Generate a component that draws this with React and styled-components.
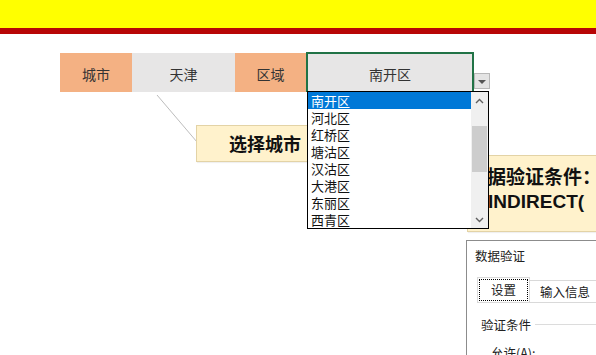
import React from "react";
import styled, { createGlobalStyle } from "styled-components";

const Global = createGlobalStyle`
  html, body { margin: 0; padding: 0; background: #fff; overflow: hidden; }
  body { font-family: "Noto Sans CJK SC", "Liberation Sans", sans-serif; }
`;

const Page = styled.div`
  width: 596px;
  height: 355px;
  overflow: hidden;
  display: flex;
  flex-direction: column;
`;

const Band = styled.div`
  height: ${(p) => p.$h}px;
  background: ${(p) => p.$c};
  flex-shrink: 0;
`;

const Canvas = styled.div`
  position: relative;
  flex: 1;
  padding: 18px 0 0 60px;
`;

const Row = styled.div`
  display: flex;
  align-items: stretch;
  height: 40px;
`;

const Cell = styled.div`
  width: ${(p) => p.$w}px;
  box-sizing: border-box;
  background: ${(p) => (p.$head ? "#F4B183" : "#E7E6E6")};
  border: ${(p) => (p.$active ? "2px solid #217346" : "none")};
  border-bottom: none;
  margin-top: ${(p) => (p.$active ? 0 : 1)}px;
  display: flex;
  align-items: center;
  justify-content: center;
  font-size: 14px;
  color: #333;
  padding-top: 2px;
`;

const DropBtn = styled.div`
  position: absolute;
  left: 474px;
  top: 39px;
  width: 16px;
  height: 16px;
  box-sizing: border-box;
  background: #e4e4e4;
  border: 1px solid #b8b8b8;
  display: flex;
  align-items: center;
  justify-content: center;
  &::after {
    content: "";
    border-left: 4px solid transparent;
    border-right: 4px solid transparent;
    border-top: 4px solid #555;
    margin-top: 1px;
  }
`;

const ListBox = styled.div`
  position: absolute;
  left: 307px;
  top: 57px;
  width: 182px;
  height: 138px;
  box-sizing: border-box;
  border: 1px solid #000;
  background: #fff;
  display: flex;
  z-index: 5;
`;

const Items = styled.div`
  flex: 1;
  display: flex;
  flex-direction: column;
`;

const Item = styled.div`
  height: 17px;
  line-height: 17px;
  font-size: 13px;
  padding-left: 3px;
  overflow: hidden;
  color: ${(p) => (p.$sel ? "#fff" : "#111")};
  background: ${(p) => (p.$sel ? "#0078D7" : "transparent")};
`;

const Scroll = styled.div`
  width: 17px;
  background: #f0f0f0;
  display: flex;
  flex-direction: column;
  align-items: stretch;
`;

const ScrollArrow = styled.div`
  height: 17px;
  display: flex;
  align-items: center;
  justify-content: center;
`;

const ScrollTrack = styled.div`
  flex: 1;
  padding-top: 17px;
`;

const Thumb = styled.div`
  height: 46px;
  margin: 0 1px;
  background: #cdcdcd;
`;

const Connector = styled.svg`
  position: absolute;
  left: 0;
  top: 0;
  width: 596px;
  height: 321px;
  pointer-events: none;
`;

const Callout = styled.div`
  position: absolute;
  left: ${(p) => p.$x}px;
  top: ${(p) => p.$y}px;
  width: ${(p) => p.$w}px;
  height: ${(p) => p.$h}px;
  box-sizing: border-box;
  background: #FFF2CC;
  border: 1px solid #E3D3A6;
  box-shadow: 1px 1px 1px rgba(0,0,0,0.06);
  font-weight: bold;
  color: #111;
`;

const CityText = styled.div`
  font-size: 18px;
  line-height: 35px;
  padding-left: 32px;
`;

const Lines = styled.div`
  padding-top: 7px;
`;

const Line = styled.div`
  font-size: 19px;
  line-height: 25px;
  white-space: nowrap;
  padding-left: ${(p) => p.$pl}px;
  padding-top: ${(p) => (p.$latin ? 1 : 0)}px;
  font-family: ${(p) => (p.$latin ? '"Liberation Sans", Arial, sans-serif' : '"Noto Sans CJK SC", sans-serif')};
`;

const Dialog = styled.div`
  position: absolute;
  left: 466px;
  top: 206px;
  width: 150px;
  height: 130px;
  box-sizing: border-box;
  border: 1px solid #8c8c8c;
  background: #fff;
  font-size: 12.5px;
  color: #222;
`;

const Title = styled.div`
  height: 30px;
  line-height: 30px;
  padding-left: 8px;
`;

const Body = styled.div`
  padding: 6px 0 0 10px;
`;

const Tabs = styled.div`
  display: flex;
  align-items: flex-end;
  height: 25px;
  border-bottom: 1px solid #d9d9d9;
`;

const Tab = styled.div`
  box-sizing: border-box;
  height: ${(p) => (p.$active ? 25 : 22)}px;
  padding: 0 ${(p) => (p.$active ? 1 : 10)}px;
  border: 1px solid #d9d9d9;
  border-bottom: none;
  border-left: ${(p) => (p.$active ? "1px solid #d9d9d9" : "none")};
  background: #fff;
  display: flex;
  align-items: center;
  font-size: 12.5px;
`;

const Focus = styled.span`
  border: 1px dotted #000;
  padding: 1px 11px;
  line-height: 18px;
`;

const Group = styled.div`
  display: flex;
  align-items: center;
  gap: 4px;
  margin: 12px 0 0 4px;
  &::after {
    content: "";
    flex: 1;
    height: 1px;
    background: #dcdcdc;
  }
`;

const Field = styled.div`
  margin: 9px 0 0 14px;
`;

const Chevron = ({ up }) => (
  <svg width="9" height="6" viewBox="0 0 9 6">
    <path
      d={up ? "M1 5 L4.5 1.5 L8 5" : "M1 1 L4.5 4.5 L8 1"}
      fill="none"
      stroke="#606060"
      strokeWidth="1.4"
    />
  </svg>
);

const districts = ["南开区", "河北区", "红桥区", "塘沽区", "汉沽区", "大港区", "东丽区", "西青区"];

export default function App() {
  return (
    <Page>
      <Global />
      <Band $h={28} $c="#FFFF00" />
      <Band $h={6} $c="#B80606" />
      <Canvas>
        <Row>
          <Cell $w={72} $head>城市</Cell>
          <Cell $w={103}>天津</Cell>
          <Cell $w={71} $head>区域</Cell>
          <Cell $w={168} $active>南开区</Cell>
        </Row>
        <DropBtn />
        <Connector>
          <line x1="157" y1="61" x2="197" y2="108" stroke="#bdbdbd" strokeWidth="1" />
        </Connector>
        <Callout $x={196} $y={91} $w={140} $h={37}>
          <CityText>选择城市</CityText>
        </Callout>
        <Callout $x={467} $y={121} $w={140} $h={77}>
          <Lines>
            <Line $pl={0}>数据验证条件：</Line>
            <Line $pl={9} $latin>=INDIRECT(</Line>
          </Lines>
        </Callout>
        <ListBox>
          <Items>
            {districts.map((d, i) => (
              <Item key={d} $sel={i === 0}>{d}</Item>
            ))}
          </Items>
          <Scroll>
            <ScrollArrow><Chevron up /></ScrollArrow>
            <ScrollTrack><Thumb /></ScrollTrack>
            <ScrollArrow><Chevron /></ScrollArrow>
          </Scroll>
        </ListBox>
        <Dialog>
          <Title>数据验证</Title>
          <Body>
            <Tabs>
              <Tab $active><Focus>设置</Focus></Tab>
              <Tab>输入信息</Tab>
            </Tabs>
            <Group>验证条件</Group>
            <Field>允许(A):</Field>
          </Body>
        </Dialog>
      </Canvas>
    </Page>
  );
}
